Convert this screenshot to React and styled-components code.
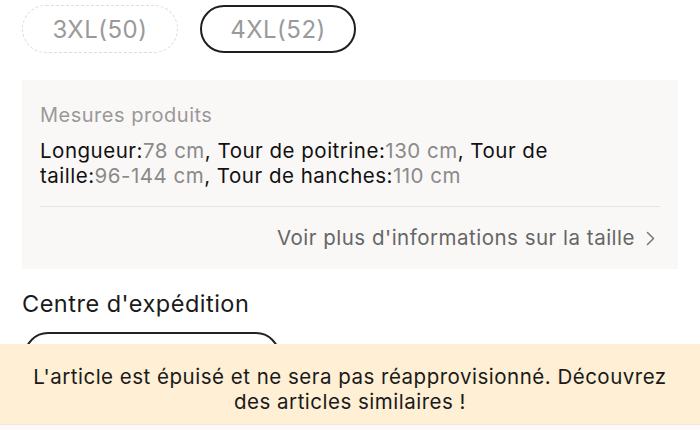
import React from 'react'
import styled, { createGlobalStyle } from 'styled-components'

const GlobalStyle = createGlobalStyle`
  html, body {
    margin: 0;
    padding: 0;
    background: #fff;
  }
  body {
    font-family: Inter, 'Liberation Sans', Arial, sans-serif;
    color: #222;
    letter-spacing: 0.5px;
    -webkit-font-smoothing: antialiased;
  }
`

const Page = styled.div`
  width: 700px;
  height: 430px;
  overflow: hidden;
  padding: 5px 22px 0;
  box-sizing: border-box;
  display: flex;
  flex-flow: column nowrap;
`

const SizeRow = styled.div`
  display: flex;
  flex-flow: row nowrap;
  gap: 22px;
`

const SizeChip = styled.div`
  width: 156px;
  height: 48px;
  box-sizing: border-box;
  border-radius: 24px;
  display: flex;
  align-items: center;
  justify-content: center;
  font-size: 24px;
  color: #9a9a9a;
  border: ${p => (p.$selected ? '2px solid #1f1f1f' : '1.5px dashed #dcdcdc')};
`

const MeasurePanel = styled.div`
  margin-top: 27px;
  background: #faf8f7;
  padding: 22px 18px 18px;
  display: flex;
  flex-flow: column nowrap;
`

const PanelTitle = styled.div`
  font-size: 20px;
  color: #999;
  line-height: 26px;
`

const MeasureText = styled.div`
  margin-top: 10px;
  font-size: 20.5px;
  line-height: 25px;
  color: #111;
`

const Value = styled.span`
  color: #8a8a8a;
`

const Divider = styled.div`
  height: 1px;
  background: #e6e4e2;
  margin: 18px 0 0;
`

const MoreLink = styled.div`
  margin-top: 18px;
  margin-right: 5px;
  align-self: flex-end;
  display: flex;
  align-items: center;
  gap: 11px;
  font-size: 20.5px;
  line-height: 26px;
  color: #666;
`

const SectionTitle = styled.div`
  margin-top: 20px;
  font-size: 23.5px;
  line-height: 30px;
  color: #1a1a1a;
`

const OriginChip = styled.div`
  margin-top: 13px;
  margin-left: 2px;
  width: 256px;
  height: 48px;
  box-sizing: border-box;
  border: 2px solid #222;
  border-radius: 24px;
`

const Banner = styled.div`
  position: fixed;
  left: 0;
  right: 0;
  bottom: 5px;
  height: 81px;
  background: #feefd5;
  display: flex;
  align-items: center;
  justify-content: center;
  text-align: center;
  padding: 9px 30px 0;
  box-sizing: border-box;
  font-size: 20.5px;
  line-height: 25px;
  color: #1a1a1a;
`

const BottomEdge = styled.div`
  position: fixed;
  left: 0;
  right: 0;
  bottom: 0;
  height: 5px;
  background: #fdf9f9;
  border-top: 1px solid #f6e4e0;
`

function Chevron() {
  return (
    <svg width='9' height='15' viewBox='0 0 9 15' fill='none'>
      <path d='M1.5 1.5 L7.5 7.5 L1.5 13.5' stroke='#777' strokeWidth='1.5' strokeLinecap='round' strokeLinejoin='round' />
    </svg>
  )
}

export default function App() {
  return (
    <>
      <GlobalStyle />
      <Page>
        <SizeRow>
          <SizeChip>3XL(50)</SizeChip>
          <SizeChip $selected>4XL(52)</SizeChip>
        </SizeRow>
        <MeasurePanel>
          <PanelTitle>Mesures produits</PanelTitle>
          <MeasureText>
            Longueur:<Value>78 cm</Value>, Tour de poitrine:<Value>130 cm</Value>, Tour de
            <br />
            taille:<Value>96-144 cm</Value>, Tour de hanches:<Value>110 cm</Value>
          </MeasureText>
          <Divider />
          <MoreLink>
            Voir plus d'informations sur la taille
            <Chevron />
          </MoreLink>
        </MeasurePanel>
        <SectionTitle>Centre d'expédition</SectionTitle>
        <OriginChip />
      </Page>
      <Banner>
        L'article est épuisé et ne sera pas réapprovisionné. Découvrez<br />des articles similaires !
      </Banner>
      <BottomEdge />
    </>
  )
}
